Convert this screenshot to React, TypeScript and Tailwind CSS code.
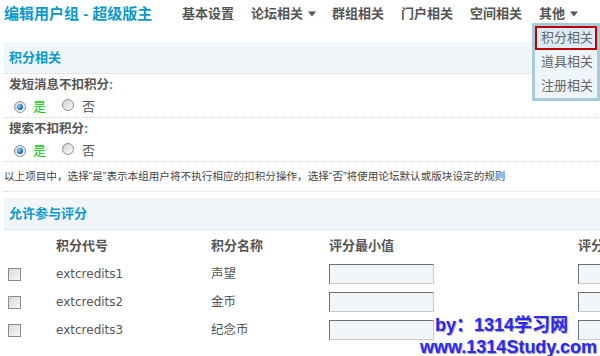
import React from "react";

function Radio({ checked }: { checked?: boolean }) {
  return (
    <span className="inline-flex w-[12px] h-[12px] shrink-0 items-center justify-center rounded-full border border-[#8593a1] bg-[linear-gradient(135deg,#cfd3d6,#fbfbfb)]">
      {checked && (
        <span className="block w-[6px] h-[6px] rounded-full bg-[radial-gradient(circle_at_35%_35%,#9ad6ff,#0b5aa8_70%)]" />
      )}
    </span>
  );
}

function Checkbox() {
  return (
    <span className="block w-[13px] h-[13px] border border-[#8c8c8c] bg-[linear-gradient(135deg,#d8d8d8,#f9f9f9)]" />
  );
}

function Input() {
  return (
    <span className="block w-[105px] h-[20px] border border-t-[#707070] border-l-[#707070] border-r-[#c9c9c9] border-b-[#c9c9c9] bg-[#f1f6fb]" />
  );
}

function Caret() {
  return (
    <svg width="8" height="6" viewBox="0 0 8 6" className="ml-[5px]">
      <path d="M0 0.5 H8 L4 5.5 Z" fill="#555" />
    </svg>
  );
}

function SectionHeader({ title }: { title: string }) {
  return (
    <div className="h-[32px] flex items-center pl-[5px] bg-[#f1f6fb] border-b border-dotted border-[#c3dce9] text-[13px] font-bold text-[#0a99cc]">
      {title}
    </div>
  );
}

function RadioRow() {
  return (
    <div className="h-[22px] flex items-center pl-[10px] border-b border-dotted border-[#c9dde8] text-[13px]">
      <Radio checked />
      <span className="ml-[7px] text-[#00cc00]">是</span>
      <span className="ml-[16px]">
        <Radio />
      </span>
      <span className="ml-[8px] text-[#555]">否</span>
    </div>
  );
}

const rows = [
  { code: "extcredits1", name: "声望" },
  { code: "extcredits2", name: "金币" },
  { code: "extcredits3", name: "纪念币" },
];

export default function App() {
  return (
    <div className="relative w-[600px] h-[356px] overflow-hidden bg-white font-['Liberation_Sans','Noto_Sans_CJK_SC',sans-serif] text-[#555]">
      {/* top bar */}
      <div className="h-[28px] flex items-center pl-[4px]">
        <div className="w-[178px] text-[15px] font-bold text-[#0a99cc] whitespace-nowrap">
          编辑用户组 - 超级版主
        </div>
        <div className="flex items-center text-[13px] font-bold text-[#555] whitespace-nowrap">
          <span className="w-[69px]">基本设置</span>
          <span className="w-[81px] flex items-center">
            论坛相关
            <Caret />
          </span>
          <span className="w-[69px]">群组相关</span>
          <span className="w-[69px]">门户相关</span>
          <span className="w-[69px]">空间相关</span>
          <span className="flex items-center">
            其他
            <Caret />
          </span>
        </div>
      </div>

      {/* content */}
      <div className="pl-[4px] mt-[14px]">
        <SectionHeader title="积分相关" />
        <div className="h-[22px] flex items-center pl-[5px] text-[12.5px] font-bold text-[#555]">
          发短消息不扣积分<span className="text-[#3a7bb0]">:</span>
        </div>
        <RadioRow />
        <div className="h-[22px] flex items-center pl-[5px] text-[12.5px] font-bold text-[#555]">
          搜索不扣积分<span className="text-[#3a7bb0]">:</span>
        </div>
        <RadioRow />
        <div className="h-[30px] flex items-center border-b border-dotted border-[#c9dde8] text-[10.6px] text-[#444] whitespace-nowrap">
          以上项目中，选择“是”表示本组用户将不执行相应的扣积分操作，选择“否”将使用论坛默认或版块设定的规则
        </div>

        <div className="mt-[6px]">
          <SectionHeader title="允许参与评分" />
        </div>

        <div className="mt-[2px] grid grid-cols-[52px_155px_118px_249px_1fr] auto-rows-[28px] items-center text-[12px] whitespace-nowrap">
          <span />
          <span className="text-[13px] font-bold">积分代号</span>
          <span className="text-[13px] font-bold">积分名称</span>
          <span className="text-[13px] font-bold">评分最小值</span>
          <span className="text-[13px] font-bold">评分最大值</span>
          {rows.map((r) => (
            <React.Fragment key={r.code}>
              <span className="pl-[4px]">
                <Checkbox />
              </span>
              <span className="font-['DejaVu_Sans',sans-serif] text-[12px] text-[#555]">{r.code}</span>
              <span className="text-[12.5px] text-[#555]">{r.name}</span>
              <span>
                <Input />
              </span>
              <span>
                <Input />
              </span>
            </React.Fragment>
          ))}
        </div>
      </div>

      {/* dropdown menu */}
      <div className="absolute left-[532px] top-[23px] w-[68px] border-[3px] border-[#a9cad9] bg-[#eef5fa] text-[13px] text-[#666] whitespace-nowrap">
        <div className="h-[24px] flex items-center pl-[4px] border-2 border-[#c00000] bg-[#dcebf6]">
          积分相关
        </div>
        <div className="h-[24px] flex items-center pl-[6px]">道具相关</div>
        <div className="h-[24px] flex items-center pl-[6px]">注册相关</div>
      </div>

      {/* watermark */}
      <div className="absolute left-[420px] top-[314px] text-[18px] leading-[22px] font-bold text-[#2a2af2] [text-shadow:1px_1px_1px_#9a9a9a] whitespace-nowrap">
        <div className="pl-[15px]">by：1314学习网</div>
        <div>www.1314Study.com</div>
      </div>
    </div>
  );
}
